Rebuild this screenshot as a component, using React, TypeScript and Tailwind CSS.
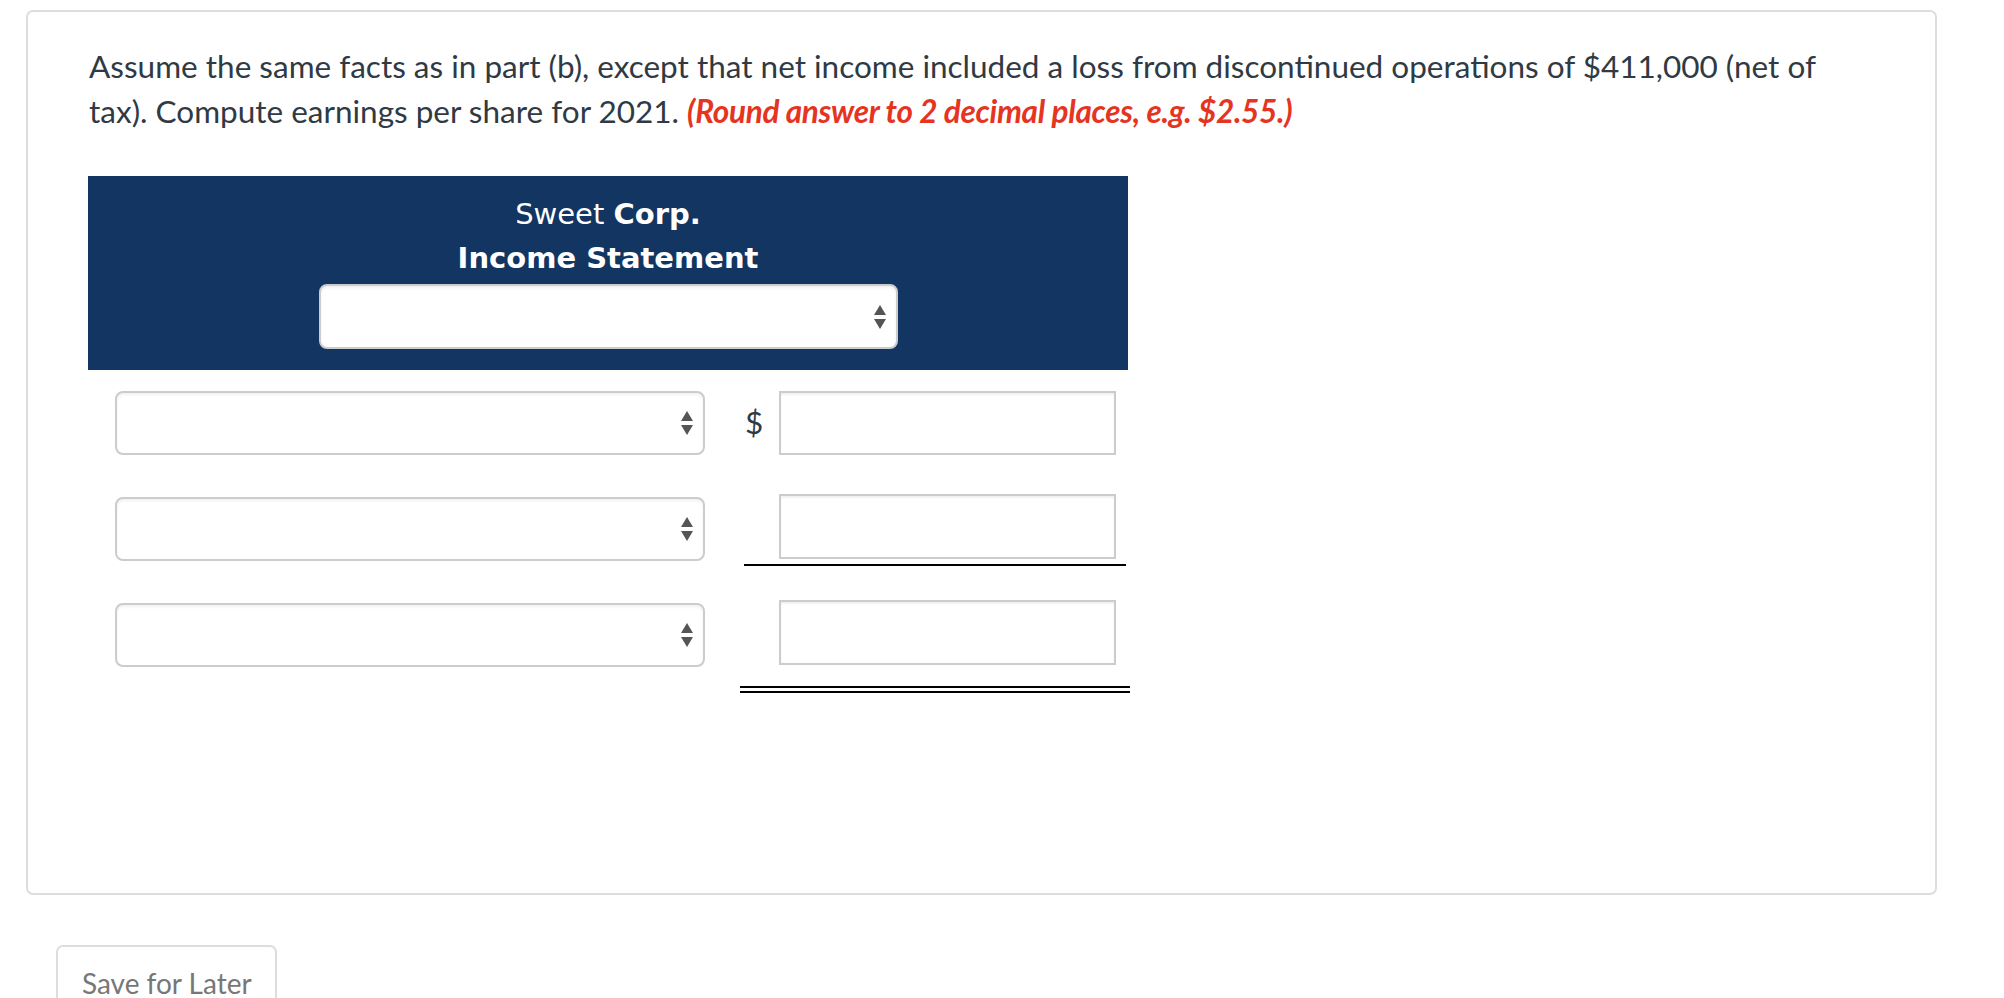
import React from 'react';

// Small up/down arrows used by the native-looking selects
const SelectArrows = () => (
    <svg width="14" height="28" viewBox="0 0 14 28" className="shrink-0">
        <polygon points="7,2 13,12 1,12" fill="#555555" />
        <polygon points="1,16 13,16 7,26" fill="#555555" />
    </svg>
);

const FakeSelect = ({ className = '' }: { className?: string }) => (
    <div
        className={`flex items-center justify-end pr-[9px] bg-white border-2 border-[#cccccc] rounded-[8px] shadow-[inset_0_2px_3px_rgba(0,0,0,0.06)] ${className}`}
    >
        <SelectArrows />
    </div>
);

const AmountInput = ({ className = '' }: { className?: string }) => (
    <div
        className={`w-[337px] bg-white border-2 border-[#cccccc] shadow-[inset_0_2px_2px_rgba(0,0,0,0.06)] ${className}`}
    />
);

export default function App() {
    return (
        <div className="min-h-screen bg-white font-['Lato','Liberation_Sans',sans-serif] text-[#2f3a44]">
            {/* Question card */}
            <div className="ml-[26px] mt-[10px] w-[1911px] h-[885px] border-2 border-[#dddddd] rounded-[7px] pt-[32px] pl-[61px] pr-[80px]">
                <p className="text-[31.5px] leading-[45px]">
                    Assume the same facts as in part (b), except that net income included a loss from discontinued
                    operations of $411,000 (net of tax). Compute earnings per share for 2021.{' '}
                    <span className="font-bold italic text-[#e5341f] tracking-[-0.3px]">
                        (Round answer to 2 decimal places, e.g. $2.55.)
                    </span>
                </p>

                {/* Statement header */}
                <div className="mt-[42px] -ml-px w-[1040px] bg-[#133562] pt-[16px] pb-[21px] flex flex-col items-center text-white font-['DejaVu_Sans','Verdana',sans-serif] text-[29px] leading-[44px]">
                    <div>
                        Sweet <span className="font-bold">Corp.</span>
                    </div>
                    <div className="font-bold">Income Statement</div>
                    <FakeSelect className="mt-[4px] w-[579px] h-[65px]" />
                </div>

                {/* Statement rows */}
                <div className="pl-[26px] pt-[21px]">
                    {/* Row 1 */}
                    <div className="flex items-start">
                        <FakeSelect className="w-[590px] h-[64px]" />
                        <div className="ml-[39px] w-[382px] flex items-center h-[64px]">
                            <span className="w-[35px] pl-[1px] text-[31.5px]">$</span>
                            <AmountInput className="h-[64px]" />
                        </div>
                    </div>

                    {/* Row 2 */}
                    <div className="flex items-start mt-[39px]">
                        <FakeSelect className="mt-[3px] w-[590px] h-[64px]" />
                        <div className="ml-[39px] w-[382px] pl-[35px] pb-[5px] border-b-2 border-black">
                            <AmountInput className="h-[65px]" />
                        </div>
                    </div>

                    {/* Row 3 */}
                    <div className="flex items-start mt-[34px]">
                        <FakeSelect className="mt-[3px] w-[590px] h-[64px]" />
                        <div className="ml-[35px] w-[390px]">
                            <div className="pl-[39px]">
                                <AmountInput className="h-[65px]" />
                            </div>
                            <div className="mt-[21px] h-[7px] border-y-2 border-black" />
                        </div>
                    </div>
                </div>
            </div>

            {/* Footer actions */}
            <div className="pl-[56px] pt-[50px]">
                <button className="h-[80px] w-[221px] border-2 border-[#dddddd] rounded-[7px] bg-white text-left pl-[24px] pb-[4px] text-[28px] text-[#777777]">
                    Save for Later
                </button>
            </div>
        </div>
    );
}
